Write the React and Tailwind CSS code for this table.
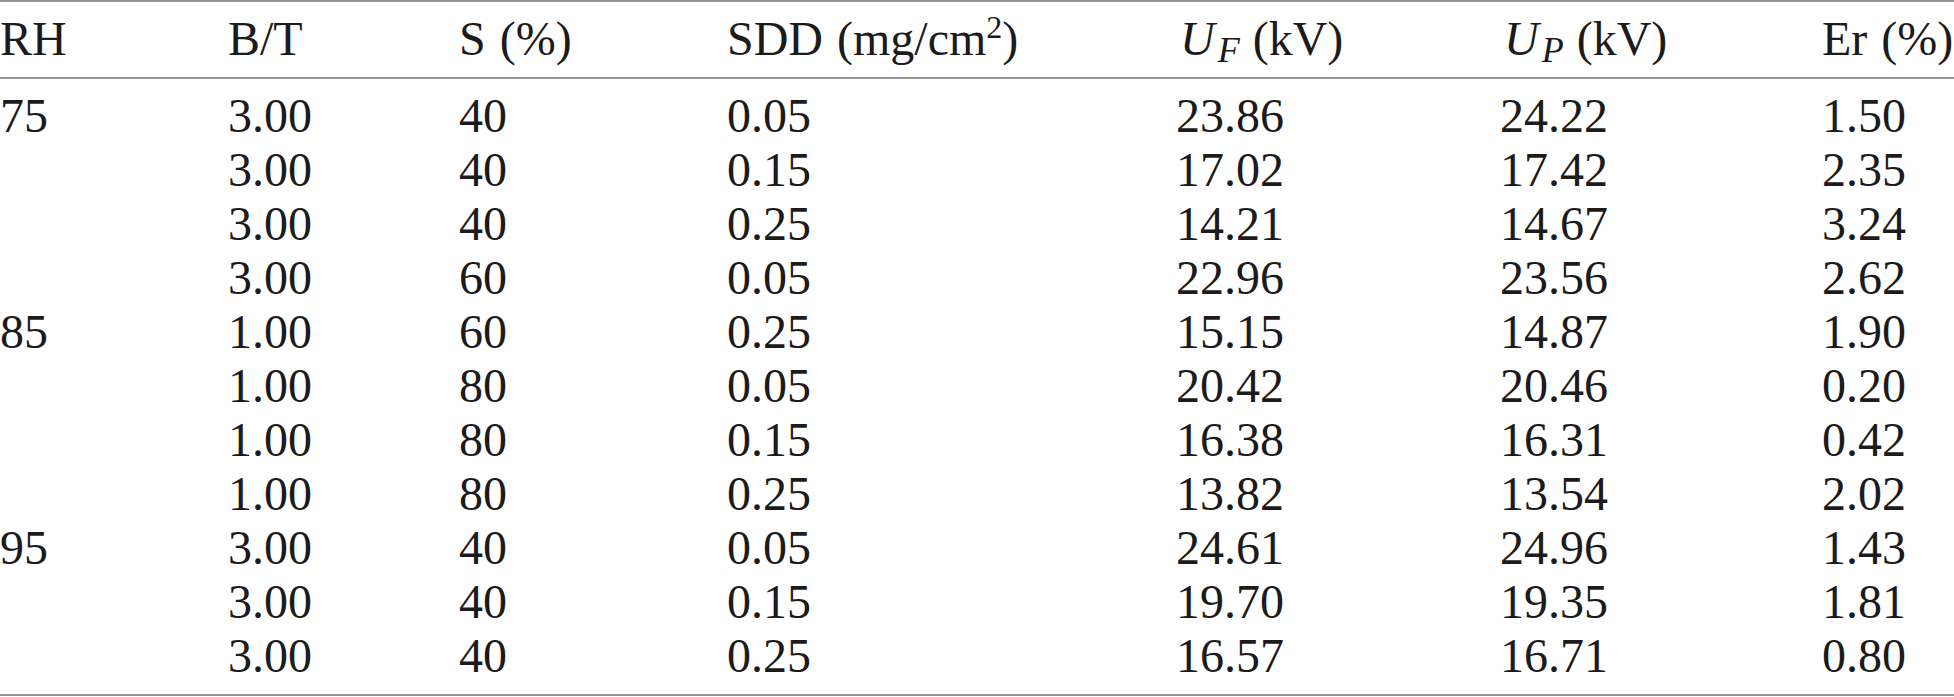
import React from "react";

const rows = [
  ["75", "3.00", "40", "0.05", "23.86", "24.22", "1.50"],
  ["", "3.00", "40", "0.15", "17.02", "17.42", "2.35"],
  ["", "3.00", "40", "0.25", "14.21", "14.67", "3.24"],
  ["", "3.00", "60", "0.05", "22.96", "23.56", "2.62"],
  ["85", "1.00", "60", "0.25", "15.15", "14.87", "1.90"],
  ["", "1.00", "80", "0.05", "20.42", "20.46", "0.20"],
  ["", "1.00", "80", "0.15", "16.38", "16.31", "0.42"],
  ["", "1.00", "80", "0.25", "13.82", "13.54", "2.02"],
  ["95", "3.00", "40", "0.05", "24.61", "24.96", "1.43"],
  ["", "3.00", "40", "0.15", "19.70", "19.35", "1.81"],
  ["", "3.00", "40", "0.25", "16.57", "16.71", "0.80"],
];

const cols = "grid grid-cols-[228px_231px_268px_449px_324px_322px_132px]";

export default function App() {
  return (
    <div className="w-[1954px] h-[697px] bg-white text-[#1c1a1b] font-['Liberation_Serif','Times_New_Roman',serif] text-[48px] leading-[54px] overflow-hidden">
      <div className="border-t-2 border-[#939393]">
        <div className={`${cols} pt-[10px] pb-[11px] border-b-2 border-[#939393] whitespace-nowrap`}>
          <div>RH</div>
          <div>B/T</div>
          <div>
            S<span className="ml-[14px]">(%)</span>
          </div>
          <div>
            SDD<span className="ml-[14px]">(mg/cm</span>
            <sup className="text-[32px] leading-none relative -top-[17px] align-baseline">2</sup>)
          </div>
          <div>
            <span className="italic ml-[4px]">U</span>
            <sub className="italic text-[36px] leading-none relative top-[7px] align-baseline ml-[3px]">F</sub>
            <span className="ml-[13px]">(kV)</span>
          </div>
          <div>
            <span className="italic ml-[4px]">U</span>
            <sub className="italic text-[36px] leading-none relative top-[7px] align-baseline ml-[3px]">P</sub>
            <span className="ml-[13px]">(kV)</span>
          </div>
          <div>
            Er<span className="ml-[14px]">(%)</span>
          </div>
        </div>
        <div className="pt-[10px] pb-[11px] border-b-2 border-[#939393]">
          {rows.map((r, i) => (
            <div key={i} className={`${cols} whitespace-nowrap`}>
              {r.map((c, j) => (
                <div key={j}>{c}</div>
              ))}
            </div>
          ))}
        </div>
      </div>
    </div>
  );
}
